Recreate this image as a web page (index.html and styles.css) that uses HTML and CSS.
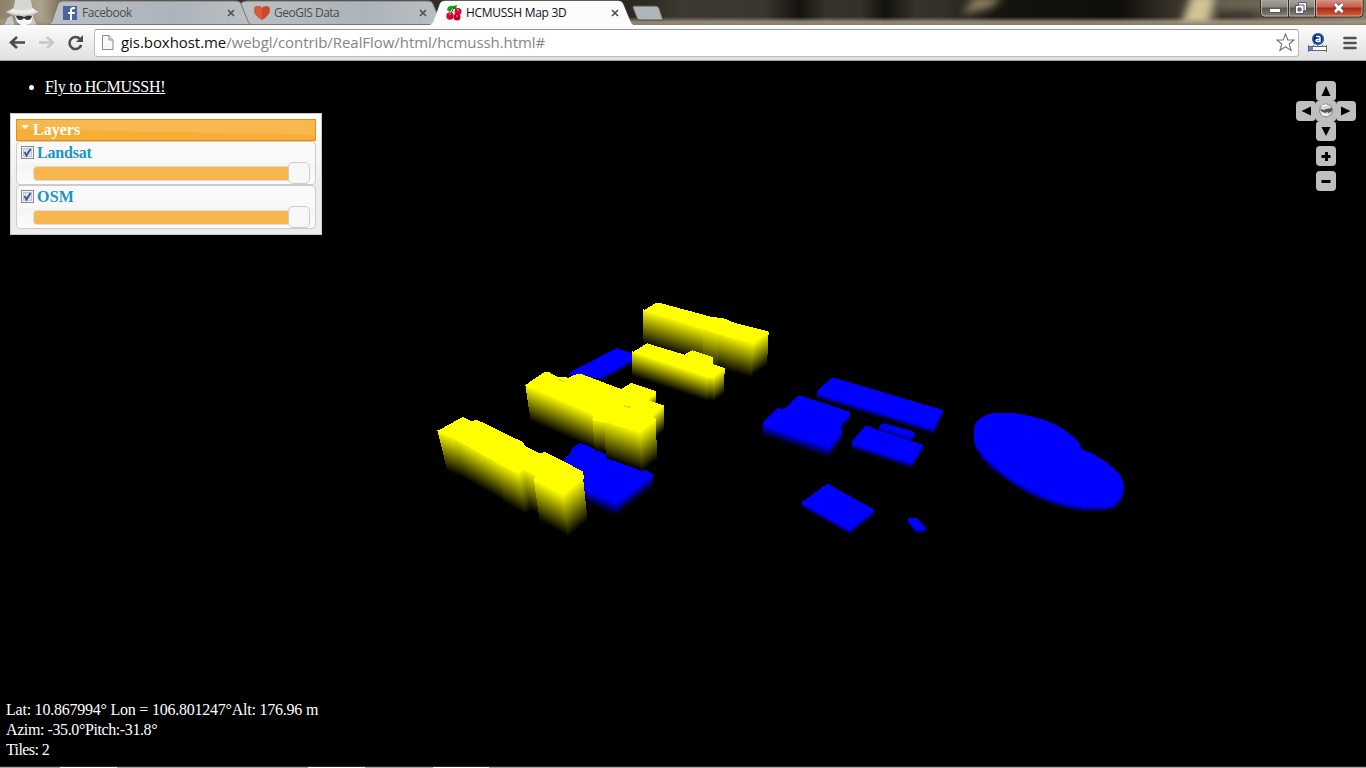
FILE: index.html
```html
<!DOCTYPE html>
<html lang="en">
<head>
<meta charset="utf-8">
<title>HCMUSSH Map 3D</title>
<link rel="stylesheet" href="styles.css">
</head>
<body>
<div class="browser">
  <header class="tabstrip">
    <svg class="frame" width="1366" height="25" viewBox="0 0 1366 25">
      <defs>
        <linearGradient id="glass">
          <stop offset="0" stop-color="#8b8069"/><stop offset=".03" stop-color="#afa38b"/><stop offset=".06" stop-color="#3c372b"/>
          <stop offset=".47" stop-color="#2c2922"/><stop offset=".5" stop-color="#3d3a32"/><stop offset=".56" stop-color="#39362e"/>
          <stop offset=".585" stop-color="#14120d"/><stop offset=".605" stop-color="#36332b"/><stop offset=".63" stop-color="#34312a"/>
          <stop offset=".648" stop-color="#12110c"/><stop offset=".67" stop-color="#35322a"/><stop offset=".69" stop-color="#343128"/>
          <stop offset=".73" stop-color="#15130e"/><stop offset=".82" stop-color="#100e09"/><stop offset=".86" stop-color="#39342a"/>
          <stop offset=".9" stop-color="#4c463a"/><stop offset="1" stop-color="#81796a"/>
        </linearGradient>
        <linearGradient id="rim" x2="0" y2="1"><stop offset="0" stop-color="#a69c85" stop-opacity="0"/><stop offset=".6" stop-color="#a69c85" stop-opacity=".8"/><stop offset="1" stop-color="#8c806c"/></linearGradient>
        <filter id="soft"><feGaussianBlur stdDeviation="4"/></filter>
      </defs>
      <rect width="1366" height="25" fill="url(#glass)"/>
      <g filter="url(#soft)">
        <path d="M962 14L974-3H1004L990 8Z" fill="#8f8260"/>
        <path d="M1180 28L1192-6H1216L1208 28Z" fill="#d2c397"/>
        <path d="M1218 0h50v7h-50z" fill="#7c7463"/>
        <path d="M1216 12h40v5h-40z" fill="#28241c"/>
      </g>
      <rect y="17" width="1366" height="8" fill="url(#rim)"/>
    </svg>
    <svg class="spy" width="40" height="25" viewBox="0 0 40 25">
      <path d="M4 25l3-7 5-3 3 10zM25 25l4-10 5 3 3 7z" fill="#c9c9c7" stroke="#8b877c" stroke-width=".6"/>
      <path d="M14 13h20l-3 10-5 2h-5l-4-3z" fill="#f7f7f6"/>
      <path d="M15-1h16l2 9 7 4-7 3q-11 3-21 0l-7-3 8-4z" fill="#d6d6d4" stroke="#8b877c" stroke-width=".6"/>
      <path d="M13 9q11 3 20-1l3 4q-13 4-27 0z" fill="#ececea"/>
      <path d="M16 16q4-1 8 1 4-2 8-1-1 4-4 4-3 0-4-2-1 2-4 2-3 0-4-4z" fill="#333"/>
    </svg>
    <nav class="tabs">
      <div class="tab tab-first">
        <svg class="tab-bg" width="203" height="25" viewBox="0 0 203 25"><defs><linearGradient id="dim"><stop offset="0" stop-color="#bcc0c3"/><stop offset=".6" stop-color="#acb3bb"/><stop offset="1" stop-color="#bbbfc3"/></linearGradient></defs><path d="M0 24.500Q3 24 4 21L10 4Q11 1 15 1H188Q192 1 193 4L200 21Q201 24 203 24.500Z" fill="url(#dim)" stroke="#797772"/></svg>
        <svg class="fav" width="16" height="16" viewBox="0 0 16 16"><rect x="1" y="1" width="14" height="14" fill="#4a63a4"/><path d="M8 15V9H6V7h2V5q0-3 4-3h1v2h-1q-2 0-2 1v2h3l-.5 2H10v6z" fill="#fff"/></svg>
        <span class="tab-title t1">Facebook</span>
        <svg class="x" width="8" height="8" viewBox="0 0 8 8"><path d="M1 1l6 6M7 1L1 7" stroke="#505050" stroke-width="1.700"/></svg>
      </div>
      <div class="tab">
        <svg class="tab-bg" width="203" height="25" viewBox="0 0 203 25"><path d="M0 24.500Q3 24 4 21L0 4Q3 1 7 1H188Q192 1 193 4L200 21Q201 24 203 24.500Z" fill="url(#dim)" stroke="#797772"/></svg>
        <svg class="fav" width="16" height="16" viewBox="0 0 16 16"><path d="M8 15Q0 10 0 5 0 1 4 1q3 0 4 2 1-2 4-2 4 0 4 4 0 5-8 10z" fill="#c84930"/><path d="M8 3v12Q0 10 0 5 0 1 4 1q3 0 4 2z" fill="#d35a3d"/></svg>
        <span class="tab-title t2">GeoGIS Data</span>
        <svg class="x" width="8" height="8" viewBox="0 0 8 8"><path d="M1 1l6 6M7 1L1 7" stroke="#505050" stroke-width="1.700"/></svg>
      </div>
      <div class="tab active">
        <svg class="tab-bg" width="203" height="25" viewBox="0 0 203 25"><path d="M0 25Q3 24 4 21L10 4Q11 1 15 1H188Q192 1 193 4L200 21Q201 24 203 25Z" fill="#fcfcfc" stroke="#fff" stroke-width=".5"/></svg>
        <svg class="fav" width="16" height="16" viewBox="0 0 16 16"><path d="M1 5Q2 0 7 1l4-1-1 5-3-2-3 4z" fill="#14a017"/><path d="M8 2l4 5M8 2L5 9" stroke="#126d12" fill="none"/><circle cx="12" cy="6.500" r="3.500" fill="#df093b"/><circle cx="4" cy="11" r="3.700" fill="#d80636"/><circle cx="11" cy="12" r="3.500" fill="#b5052e"/><path d="M11 5h2M3 9h2M10 11h2" stroke="#ff8da3"/></svg>
        <span class="tab-title t3">HCMUSSH Map 3D</span>
        <svg class="x" width="8" height="8" viewBox="0 0 8 8"><path d="M1 1l6 6M7 1L1 7" stroke="#505050" stroke-width="1.700"/></svg>
      </div>
    </nav>
    <svg class="newtab" width="32" height="16" viewBox="0 0 32 16"><path d="M1.500 1H24q2 0 3 2l4 12H8q-2 0-3-2L1 3Q.5 1 2 1z" fill="#aeb5bb" stroke="#57534b"/></svg>
    <svg class="winctl" width="106" height="19" viewBox="0 0 106 19">
      <defs><linearGradient id="gray" x2="0" y2="1"><stop offset="0" stop-color="#a9a69e"/><stop offset=".45" stop-color="#8a867c"/><stop offset=".5" stop-color="#57534a"/><stop offset="1" stop-color="#8a8577"/></linearGradient>
      <linearGradient id="red" x2="0" y2="1"><stop offset="0" stop-color="#d79b8e"/><stop offset=".45" stop-color="#c45d4b"/><stop offset=".5" stop-color="#ae2612"/><stop offset="1" stop-color="#d0694a"/></linearGradient></defs>
      <path d="M1.500-1V13q0 4 4 4H100q4 0 4-4V-1z" fill="url(#gray)"/><path d="M57-1v18h43q4 0 4-4V-1z" fill="url(#red)"/>
      <path d="M1.500 0V13q0 4 4 4H100q4 0 4-4V0M29.500 0v17M56.500 0v17" fill="none" stroke="#302b25"/>
      <path d="M2.500 0V13q0 3 3 3H28.500V0M30.500 0v16h25V0M57.500 0v16H100q3 0 3-3V0" fill="none" stroke="#dbc9be" stroke-opacity=".65"/>
      <rect x="10.500" y="8.500" width="11" height="4" fill="#fff" stroke="#55566b"/>
      <path d="M39.500 2.500h8v8h-3v3h-8v-8h3z" fill="#fff" stroke="#55566b"/><path d="M39 8h3v3h-3z" fill="#777" stroke="#55566b"/><path d="M40 5h5v5" fill="none" stroke="#55566b"/>
      <path d="M76 4l7.500 8M83.500 4L76 12" stroke="#55566b" stroke-width="4.500"/><path d="M76 4l7.500 8M83.500 4L76 12" stroke="#fff" stroke-width="2.700"/>
    </svg>
  </header>

  <div class="toolbar">
    <svg class="nav-icons" width="86" height="36" viewBox="0 0 86 36">
      <path d="M11 17.500h14M17 12l-6 5.500 6 5.500" fill="none" stroke="#4b4b4b" stroke-width="2.600"/>
      <path d="M39 17.500h14M47 12l6 5.500-6 5.500" fill="none" stroke="#c6c6c6" stroke-width="2.400"/>
      <path d="M80 14a6 6 0 1 0 1.200 6" fill="none" stroke="#4d4d4d" stroke-width="2.600"/><path d="M83 10v7h-7z" fill="#4d4d4d"/>
    </svg>
    <div class="omnibox">
      <svg class="page" width="12" height="15" viewBox="0 0 12 15"><path d="M.5.500H7L11 5v9.500H.5z" fill="#f8f8f8" stroke="#8b8b8b"/><path d="M7 .5V5h4" fill="#ddd" stroke="#8b8b8b"/></svg>
      <span class="url"><b>gis.boxhost.me</b>/webgl/contrib/RealFlow/html/hcmussh.html#</span>
      <svg class="star" width="19" height="19" viewBox="0 0 19 19"><path d="M9.500 1l2.300 6H18l-4.800 4 1.900 6.500-5.600-3.800-5.600 3.800L5.800 11 1 7h6.200z" fill="#fff" stroke="#767676" stroke-width="1.100"/></svg>
    </div>
    <svg class="ext" width="20" height="20" viewBox="0 0 20 20"><circle cx="10" cy="6" r="6" fill="#0b2c68"/><circle cx="10" cy="6" r="5.300" fill="none" stroke="#2c8bd5"/><path d="M8 3.500h3q1 0 1 1v4H9q-1 0-1-1t1-1h3" fill="none" stroke="#fff" stroke-width="1.400"/><rect x="1" y="13" width="18" height="5" fill="#fff"/><rect x="1" y="14" width="4" height="4" fill="#507ff0"/><path d="M.5 12v7M18.500 12v7M0 13.500h19M0 17.500h19M5.500 12v2M9.500 12v2M14.500 12v2" stroke="#666"/></svg>
    <svg class="menu" width="14" height="14" viewBox="0 0 14 14"><path d="M1.500 2h11M1.500 7h11M1.500 12h11" stroke="#515151" stroke-width="2.600" stroke-linecap="round"/></svg>
  </div>

  <main class="viewport">
    <svg class="scene" width="1366" height="707" viewBox="0 61 1366 707" shape-rendering="crispEdges">
      <defs>
        <linearGradient id="gy" x2="0" y2="1"><stop offset="0" stop-color="#ff0"/><stop offset="1" stop-color="#000"/></linearGradient>
        <linearGradient id="gb" x2="0" y2="1"><stop offset="0" stop-color="#00f"/><stop offset="1" stop-color="#000"/></linearGradient>
        <rect id="yw" width="1" height="1" fill="url(#gy)"/>
        <rect id="bw" width="1" height="1" fill="url(#gb)"/>
        <path id="oval" d="M671 234L672 206Q677 172 728 159Q785 154 848 170Q918 185 967 228Q993 251 996 268Q1060 291 1103 337Q1121 358 1121 378Q1120 410 1092 430Q1060 445 970 434Q850 411 740 322Q682 275 671 234Z"/>
      </defs>
      <g transform="translate(420 290) scale(.333333)">
        <path d="M450 247L590 174L637 190V210L540 264H495L450 256Z" fill="#00f"/>
        <use href="#bw" transform="matrix(97 -54 0 14 540 262)"/>

        <use href="#yw" transform="matrix(181 55 0 104 669 58)"/>
        <use href="#yw" transform="matrix(49 14 0 120 848 110)"/>
        <use href="#yw" transform="matrix(55 18 0 110 895 124)"/>
        <use href="#yw" transform="matrix(52 16 0 107 948 142)"/>
        <use href="#yw" transform="matrix(46 -33 -5 100 1000 158)"/>
        <path d="M669 62L708 39H720L872 80L912 85L945 99L1025 119L1046 125L1000 159L948 147L894 133L850 118Z" fill="#ff0"/>

        <use href="#yw" transform="matrix(228 76 0 74 637 184)"/>
        <use href="#yw" transform="matrix(17 0 0 72 865 258)"/>
        <use href="#yw" transform="matrix(34 -25 -2 76 880 260)"/>
        <path d="M637 187L681 160L793 194L817 181L879 202V222L915 235L880 263H865Z" fill="#ff0"/>

        <path d="M428 512L452 490V478L482 458L665 543L675 540L699 553V556L588 642L490 596L470 570Z" fill="#00f"/>
        <use href="#bw" transform="matrix(100 45 0 40 488 593)"/>
        <use href="#bw" transform="matrix(111 -86 0 40 588 638)"/>
        <path d="M480 560L665 545L695 556L588 640L488 595Z" fill="#00f"/>

        <use href="#yw" transform="matrix(24 -16 0 42 684 327)"/>
        <use href="#yw" transform="matrix(35 -33 0 75 697 378)"/>
        <use href="#yw" transform="matrix(206 88 16 110 316 284)"/>
        <use href="#yw" transform="matrix(40 5 8 98 517 384)"/>
        <use href="#yw" transform="matrix(108 38 6 118 552 386)"/>
        <use href="#yw" transform="matrix(48 -37 3 122 660 424)"/>
        <path d="M316 285L372 247H388L415 262L433 260L445 264L470 252H484L603 297L634 279L708 304V312L684 330L732 347L697 381L708 388L660 428L554 396L518 392L519 375Z" fill="#ff0"/>
        <path d="M412 267l14 2 14 8-18-3zM610 344l8 5h15l-5 5-16-4z" fill="#dddd00"/>

        <use href="#yw" transform="matrix(50 20 30 122 52 421)"/>
        <use href="#yw" transform="matrix(128 73 28 126 100 436)"/>
        <use href="#yw" transform="matrix(67 37 22 128 228 508)"/>
        <use href="#yw" transform="matrix(17 -12 22 130 294 543)"/>
        <use href="#yw" transform="matrix(38 18 20 127 309 531)"/>
        <use href="#yw" transform="matrix(88 47 18 126 341 566)"/>
        <use href="#yw" transform="matrix(60 -50 14 130 429 612)"/>
        <path d="M52 423L128 381L155 394L170 389L310 457L316 469L360 491L375 486L489 544L492 566L429 617L342 572L345 557L310 539L295 551L228 517L102 446Z" fill="#ff0"/>
      </g>
      <g transform="translate(750 360) scale(.333333)">
        <use href="#bw" transform="matrix(350 107 0 19 202 99)"/>
        <use href="#bw" transform="matrix(27 -55 0 14 552 204)"/>
        <path d="M202 93L244 54H254L579 150L552 206L202 100Z" fill="#00f"/>
        <use href="#bw" transform="matrix(200 68 -3 34 39 193)"/>
        <use href="#bw" transform="matrix(40 -50 -5 36 238 260)"/>
        <use href="#bw" transform="matrix(28 -30 0 26 271 188)"/>
        <path d="M39 188L84 144L101 148L143 107H152L299 155V163L270 200L279 212L237 263L39 197Z" fill="#00f"/>
        <use href="#bw" transform="matrix(99 31 0 14 388 202)"/>
        <path d="M388 202L396 189L480 211L497 221L488 233Z" fill="#00f"/>
        <use href="#bw" transform="matrix(179 58 0 19 306 250)"/>
        <use href="#bw" transform="matrix(34 -54 0 16 485 309)"/>
        <path d="M306 244L345 198H354L385 210L519 254L485 310L306 251Z" fill="#00f"/>
        <use href="#bw" transform="matrix(142 80 0 16 157 429)"/>
        <use href="#bw" transform="matrix(72 -58 0 16 299 509)"/>
        <path d="M157 426L229 373H237L372 449L299 511L157 431Z" fill="#00f"/>
        <use href="#bw" transform="matrix(24 30 0 13 475 480)"/>
        <use href="#bw" transform="matrix(28 -3 0 13 500 508)"/>
        <path d="M475 475H501L528 502L524 510L500 513L475 483Z" fill="#00f"/>
        <use href="#oval" y="18" fill="#000023"/><use href="#oval" y="15" fill="#00004c"/><use href="#oval" y="12" fill="#00007a"/><use href="#oval" y="9" fill="#0000a8"/><use href="#oval" y="6" fill="#0000d2"/><use href="#oval" fill="#00f"/>
      </g>
    </svg>

    <ul class="links"><li><a href="#">Fly to HCMUSSH!</a></li></ul>

    <section class="layers">
      <h3 class="layers-head"><i class="caret"></i>Layers</h3>
      <div class="layer">
        <label class="layer-name"><svg class="check" width="13" height="13" viewBox="0 0 13 13"><rect x=".5" y=".5" width="12" height="12" fill="#f4f4f4" stroke="#8a8a8c"/><rect x="2.500" y="2.500" width="8" height="8" fill="#dfe2e7" stroke="#c2c5cc"/><path d="M3.500 6l2 3.500L9.500 3" fill="none" stroke="#43589b" stroke-width="2"/></svg>Landsat</label>
        <div class="slider"><i class="knob"></i></div>
      </div>
      <div class="layer">
        <label class="layer-name osm"><svg class="check" width="13" height="13" viewBox="0 0 13 13"><rect x=".5" y=".5" width="12" height="12" fill="#f4f4f4" stroke="#8a8a8c"/><rect x="2.500" y="2.500" width="8" height="8" fill="#dfe2e7" stroke="#c2c5cc"/><path d="M3.500 6l2 3.500L9.500 3" fill="none" stroke="#43589b" stroke-width="2"/></svg>OSM</label>
        <div class="slider"><i class="knob"></i></div>
      </div>
    </section>

    <svg class="navpad" width="60" height="110" viewBox="0 0 60 110">
      <g fill="#bfbfbf"><rect x="20" width="20" height="20" rx="4"/><rect y="20" width="20" height="20" rx="4"/><rect x="20" y="20" width="20" height="20" rx="2"/><rect x="40" y="20" width="20" height="20" rx="4"/><rect x="20" y="40" width="20" height="20" rx="4"/><rect x="20" y="65" width="20" height="20" rx="4"/><rect x="20" y="90" width="20" height="20" rx="4"/></g>
      <path d="M30 5l4.500 10h-9zM30 55l4.500-9h-9zM5.500 30l9.500-4.500v9zM54.500 30L45 25.500v9z"/>
      <circle cx="30" cy="29.500" r="6.500" fill="#d8d8d8" stroke="#888"/><path d="M24 28l4 1 2-1 6-1v3l-3 2-2-1-2 1-4-2z" fill="#555"/><path d="M26 25l5-1M26 33l6 1" stroke="#fff" stroke-width="1.500"/>
      <path d="M25.500 75.500h9M30.500 71v9M25.500 100.500h9" stroke="#000" stroke-width="3"/>
    </svg>

    <div class="status">
      <div class="s1">Lat: 10.867994° Lon = 106.801247°Alt: 176.96 m</div>
      <div class="s2">Azim: -35.0°Pitch:-31.8°</div>
      <div class="s3">Tiles: 2</div>
    </div>
    <div class="taskbar"></div>
  </main>
</div>
</body>
</html>
```
FILE: styles.css
```css
* { box-sizing: border-box; }
body { margin: 0; background: #000; overflow: hidden; }
svg { display: block; flex: none; }
.browser { width: 1366px; height: 768px; display: flex; flex-direction: column; }

.tabstrip { position: relative; height: 25px; flex: none; display: flex; overflow: hidden; }
.frame, .spy { position: absolute; left: 0; top: 0; }
.tabs { position: relative; display: flex; padding-left: 48px; }
.tab { position: relative; width: 192px; height: 25px; display: flex; align-items: center; padding: 1px 4px 0 14px; }
.tab-bg { position: absolute; left: 0; top: 0; }
.tab-first { z-index: 2; }
.active { z-index: 3; }
.active .tab-bg { left: -2px; }
.fav, .tab-title, .x { position: relative; }
.fav { margin-right: 4px; }
.tab-title { flex: 1; font: 12px/18px "Open Sans", sans-serif; color: #4c4c4c; white-space: nowrap; }
.t1 { letter-spacing: -.45px; }
.t2 { letter-spacing: -.5px; }
.t3 { letter-spacing: -.3px; color: #111; }
.x { margin-right: 1px; }
.newtab { position: relative; margin: 5px 0 0 8px; }
.winctl { position: relative; margin: 0 1px 0 auto; }

.toolbar { height: 36px; flex: none; display: flex; align-items: center; background: linear-gradient(#fcfcfc, #e0e0e0); border-bottom: 1px solid #a5a5a5; }
.omnibox { width: 1205px; height: 28px; margin-left: 8px; padding: 0 3px 0 7px; display: flex; align-items: center; background: #fff; border: 1px solid #bbb; border-top-color: #9b9b9b; border-radius: 3px; }
.url { flex: 1; margin: -2px 0 0 7px; font: 15px/24px "Open Sans", sans-serif; letter-spacing: -.06px; color: #858585; white-space: nowrap; }
.url b { font-weight: 400; color: #111; }
.ext { margin-left: 9px; }
.menu { margin-left: 15px; }

.viewport { position: relative; flex: 1; color: #fff; font: 16px/20px "Liberation Serif", serif; display: flex; flex-direction: column; align-items: flex-start; }
.scene { position: absolute; left: 0; top: 0; }
.links { position: relative; margin: 16px 0 0 5px; padding-left: 40px; font-size: 16px; }
.links a { color: #fff; letter-spacing: -.28px; }
.layers { position: relative; width: 312px; height: 122px; margin: 16px 0 0 10px; padding: 5px; background: linear-gradient(#fff, #ededed 60%); border: 1px solid #ccc; }
.layers-head { display: flex; align-items: center; height: 22px; margin: 0; font-size: 16px; line-height: 20px; border: 1px solid #e78f08; background: linear-gradient(181deg, #f7b850 56%, #f6ae37 60%); }
.caret { border: 4px solid transparent; border-top-color: #fff; margin: 0 4px 2px 4px; width: 0; height: 0; }
.layer { height: 44px; border: 1px solid #ccc; border-radius: 4px; padding: 1px 5px; background: linear-gradient(#f9f9f9 50%, #f4f4f4 52%, #fcfcfc); }
.layer-name { display: flex; align-items: center; height: 20px; font-weight: 700; line-height: 20px; color: #1c94c4; letter-spacing: -.2px; }
.osm { letter-spacing: .2px; }
.check { margin: 0 3px 2px -1px; }
.slider { position: relative; width: 266px; height: 15px; margin: 3px 0 0 11px; border: 1px solid #ddd; border-radius: 4px; background: #f8b74e; }
.knob { position: absolute; right: -12px; top: -5px; width: 22px; height: 22px; border: 1px solid #ccc; border-radius: 5px; background: #f7f7f7; }
.navpad { position: absolute; left: 1296px; top: 20px; }
.status { position: relative; margin: auto 0 6px 6px; white-space: nowrap; }
.s1 { letter-spacing: -.23px; }
.s2 { letter-spacing: -.4px; }
.s3 { letter-spacing: -.6px; }
.taskbar { position: relative; width: 1366px; height: 2px; border-top: 1px solid #2b2b26; background: linear-gradient(90deg, #a6a69a 60px, #fff 60px, #fff 117px, #a6a69a 117px, #a6a69a 308px, #fff 308px, #fff 365px, #a6a69a 365px, #a6a69a 433px, #fff 433px, #fff 489px, #a6a69a 489px); }
```
